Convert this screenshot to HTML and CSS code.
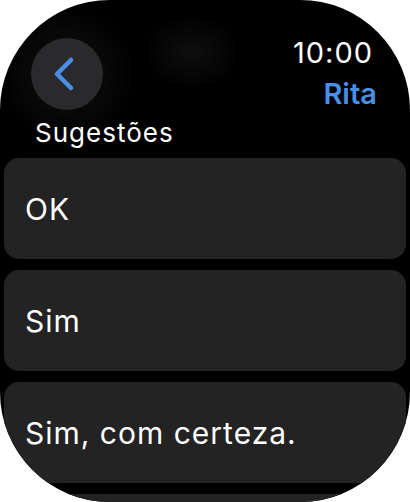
FILE: index.html
```html
<!DOCTYPE html>
<html lang="pt">
<head>
<meta charset="UTF-8">
<meta name="viewport" content="width=device-width, initial-scale=1.0">
<title>Sugestões</title>
<link rel="stylesheet" href="styles.css">
</head>
<body>
  <div id="screen">
    <div id="top">
      <div id="backButton">
        <svg width="72" height="72" viewBox="0 0 72 72">
          <path d="M40 22 L26 36 L40 50" fill="none" stroke="#4a8fe7" stroke-width="4.5" stroke-linecap="round" stroke-linejoin="round"/>
        </svg>
      </div>
      <div id="status">
        <div id="time">10:00</div>
        <div id="contact">Rita</div>
      </div>
    </div>
    <h2 id="heading">Sugestões</h2>
    <div id="list">
      <div class="reply">OK</div>
      <div class="reply">Sim</div>
      <div class="reply">Sim, com certeza.</div>
      <div class="reply"></div>
    </div>
  </div>
</body>
</html>
```

FILE: styles.css
```css
body {
  margin: 0;
  background-color: #ffffff;
  font-family: Inter, "Noto Sans", sans-serif;
}
#screen {
  width: 410px;
  height: 502px;
  border-radius: 110px;
  overflow: hidden;
  background-color: #000000;
  background-image:
    radial-gradient(ellipse 50px 38px at 192px 52px, rgba(255, 255, 255, 0.06), rgba(255, 255, 255, 0)),
    radial-gradient(ellipse 70px 70px at 67px 74px, rgba(255, 255, 255, 0.07), rgba(255, 255, 255, 0));
}
#top {
  display: flex;
  justify-content: space-between;
  padding: 36px 33px 0 31px;
}
#backButton {
  width: 72px;
  height: 72px;
  margin-top: 2px;
  border-radius: 50%;
  background-color: #2a2a2c;
}
#backButton svg {
  display: block;
}
#status {
  text-align: right;
}
#time {
  padding-right: 4px;
  color: #ffffff;
  font-size: 29px;
  line-height: 34px;
  letter-spacing: 1px;
}
#contact {
  margin-top: 7px;
  color: #4a8fe7;
  font-size: 29px;
  font-weight: 600;
  line-height: 34px;
}
#heading {
  margin: 7px 0 0 35px;
  color: #ffffff;
  font-size: 26px;
  font-weight: 400;
  line-height: 30px;
  letter-spacing: 1px;
}
#list {
  display: flex;
  flex-direction: column;
  gap: 11px;
  margin: 10px 4px 0 4px;
}
.reply {
  display: flex;
  align-items: center;
  flex-shrink: 0;
  height: 101px;
  padding-left: 21px;
  border-radius: 15px;
  background-color: #232323;
  color: #ffffff;
  font-size: 30px;
  letter-spacing: 1px;
}
```
